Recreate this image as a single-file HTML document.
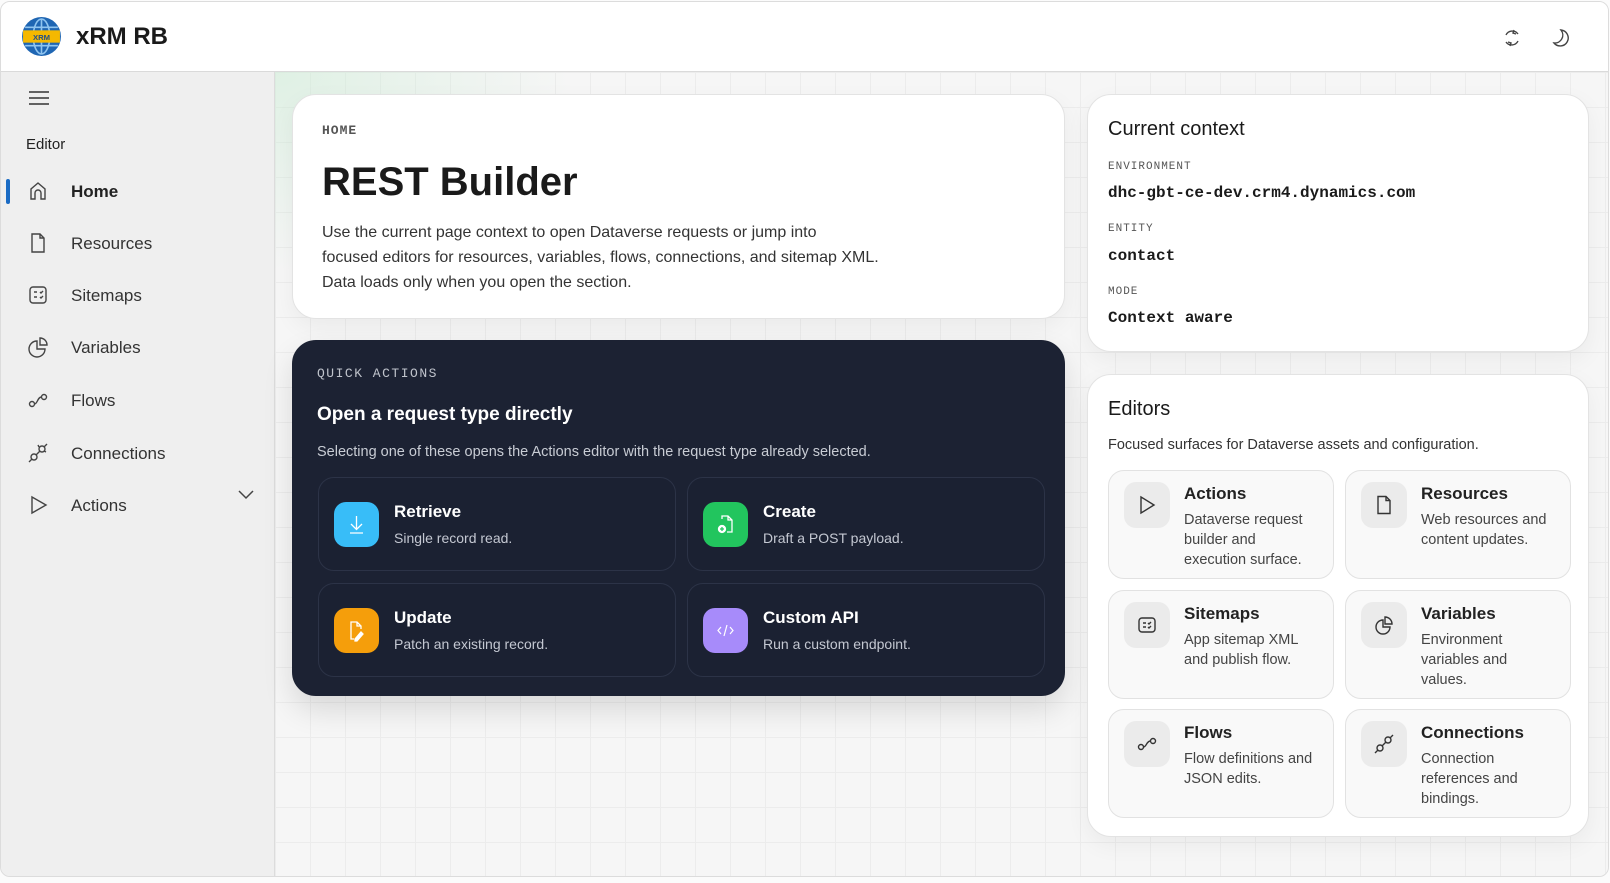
<!DOCTYPE html>
<html><head><meta charset="utf-8"><style>
*{box-sizing:border-box;margin:0;padding:0}
body{width:1610px;height:883px;overflow:hidden;background:#fbfbfb;font-family:"Liberation Sans",sans-serif;color:#1f1f1f;position:relative}
.win{position:absolute;left:0;top:1px;width:1609px;height:876px;border:1px solid #dcdcdc;border-radius:10px;overflow:hidden;background:#f5f5f5}
.hdr{position:absolute;left:0;top:0;right:0;height:70px;background:#fff;border-bottom:1px solid #dadada}
.side{position:absolute;left:0;top:70px;width:274px;bottom:0;background:#efefef;border-right:1px solid #dcdcdc}
.main{position:absolute;left:274px;top:70px;right:0;bottom:0;background-color:#f6f6f6;background-image:linear-gradient(#ececec 1px,transparent 1px),linear-gradient(90deg,#ececec 1px,transparent 1px);background-size:35px 35px}
.main:before{content:"";position:absolute;left:0;top:0;width:300px;height:200px;background:radial-gradient(ellipse at 0 0,rgba(200,235,210,.5),transparent 70%)}
.abs{position:absolute}
.card{position:absolute;background:#fff;border:1px solid #e3e3e3;border-radius:24px;box-shadow:0 8px 24px rgba(0,0,0,.05)}
.mono{font-family:"Liberation Mono",monospace}
.nav{position:absolute;left:0;width:274px;height:40px;font-size:17px;color:#333}
.nav svg{position:absolute;left:26px;top:8px}
.nav span{position:absolute;left:70px;top:10px}
.tile{position:absolute;background:#1b2132;border:1px solid #2c3347;border-radius:16px;width:358px;height:94px}
.tile .ic{position:absolute;left:15px;top:24px;width:45px;height:45px;border-radius:12px}
.tile b{position:absolute;left:75px;top:24px;color:#fff;font-size:17px}
.tile i{position:absolute;left:75px;top:52px;color:#c4c8d2;font-size:14px;font-style:normal}
.et{position:absolute;width:226px;height:109px;background:#f9f9f9;border:1px solid #e2e2e2;border-radius:16px}
.et .ic{position:absolute;left:15px;top:11px;width:46px;height:46px;border-radius:12px;background:#ebebeb}
.et .ic svg{position:absolute;left:13px;top:13px}
.et b{position:absolute;left:75px;top:13px;font-size:17px;font-weight:600;color:#222}
.et p{position:absolute;left:75px;top:39px;font-size:14.5px;line-height:20px;color:#444;width:128px}
</style></head><body>
<div class="win">
<div class="hdr">
 <svg class="abs" style="left:20px;top:14px" width="41" height="41" viewBox="0 0 40 40"><circle cx="20" cy="20" r="19" fill="#1f66b3"/><g stroke="#8fc4ef" stroke-width="1.6" fill="none"><ellipse cx="20" cy="20" rx="8" ry="17"/><line x1="20" y1="3" x2="20" y2="37"/><line x1="4" y1="11" x2="36" y2="11"/><line x1="4" y1="29" x2="36" y2="29"/></g><rect x="2" y="14" width="36" height="12" fill="#f5b800"/><text x="20" y="23.5" font-size="7.5" font-weight="bold" text-anchor="middle" fill="#1f4d8a" font-family="Liberation Sans">XRM</text></svg>
 <div class="abs" style="left:75px;top:21px;font-size:24px;font-weight:bold;color:#1a1a1a">xRM RB</div>
 <svg class="abs" style="left:1500px;top:25px" width="22" height="22" viewBox="0 0 22 22" fill="none" stroke="#444" stroke-width="1.4"><path d="M17 7a7 7 0 0 0-12 1"/><path d="M5 15a7 7 0 0 0 12-1"/><path d="M13 3l-1 3 3 1"/><path d="M9 19l1-3-3-1"/></svg>
 <svg class="abs" style="left:1550px;top:25px" width="22" height="22" viewBox="0 0 22 22" fill="none" stroke="#444" stroke-width="1.4"><path d="M10 3a8 8 0 1 1-7 13 8 8 0 0 0 7-13z"/></svg>
</div>
<div class="side">
 <svg class="abs" style="left:27px;top:17px" width="22" height="18" viewBox="0 0 22 18" stroke="#333" stroke-width="1.6"><line x1="1" y1="3" x2="21" y2="3"/><line x1="1" y1="9" x2="21" y2="9"/><line x1="1" y1="15" x2="21" y2="15"/></svg>
 <div class="abs" style="left:25px;top:64px;font-size:15px;color:#222">Editor</div>
 <div class="abs" style="left:5px;top:107px;width:4px;height:25px;border-radius:2px;background:#1a6bc4"></div>
 <div class="nav" style="top:100px"><svg width="22" height="22" viewBox="0 0 22 22" fill="none" stroke="#444" stroke-width="1.4"><path d="M4 19V9l7-6 7 6v10h-4v-6a3 3 0 0 0-6 0v6z"/></svg><span style="color:#222;font-weight:600">Home</span></div>
 <div class="nav" style="top:152px"><svg width="22" height="22" viewBox="0 0 22 22" fill="none" stroke="#444" stroke-width="1.4"><path d="M5 2h8l4 4v14H5z"/><path d="M13 2v4h4"/></svg><span>Resources</span></div>
 <div class="nav" style="top:204px"><svg width="22" height="22" viewBox="0 0 22 22" fill="none" stroke="#444" stroke-width="1.4"><rect x="3" y="3" width="16" height="16" rx="3"/><path d="M7 8h3M7 13h3M13 8l1 1 2-2M13 13l1 1 2-2"/></svg><span>Sitemaps</span></div>
 <div class="nav" style="top:256px"><svg width="22" height="22" viewBox="0 0 22 22" fill="none" stroke="#444" stroke-width="1.4"><path d="M10 5a8 8 0 1 0 8 8h-8z"/><path d="M13 2a7 7 0 0 1 7 7h-7z"/></svg><span>Variables</span></div>
 <div class="nav" style="top:309px"><svg width="22" height="22" viewBox="0 0 22 22" fill="none" stroke="#444" stroke-width="1.4"><circle cx="5" cy="15" r="2.5"/><circle cx="17" cy="8" r="2.5"/><path d="M7.5 15c3 0 3-7 7-7"/></svg><span>Flows</span></div>
 <div class="nav" style="top:362px"><svg width="22" height="22" viewBox="0 0 22 22" fill="none" stroke="#444" stroke-width="1.4"><circle cx="7" cy="15" r="3"/><circle cx="15" cy="7" r="3"/><path d="M2 20l3-3M20 2l-3 3M9 13l4-4M11 3l1 2M19 10l-2-1"/></svg><span>Connections</span></div>
 <div class="nav" style="top:414px"><svg width="22" height="22" viewBox="0 0 22 22" fill="none" stroke="#444" stroke-width="1.4"><path d="M5 3l14 8-14 8z"/></svg><span>Actions</span></div>
 <svg class="abs" style="left:237px;top:418px" width="16" height="10" viewBox="0 0 16 10" fill="none" stroke="#444" stroke-width="1.5"><path d="M1 1l7 7 7-7"/></svg>
</div>
<div class="main"></div>

<div class="card" style="left:291px;top:92px;width:773px;height:225px">
 <div class="abs mono" style="left:29px;top:28px;font-size:13px;font-weight:bold;color:#555;letter-spacing:1px">HOME</div>
 <div class="abs" style="left:29px;top:65px;font-size:40px;font-weight:bold;color:#1a1a1a">REST Builder</div>
 <div class="abs" style="left:29px;top:125px;font-size:16px;line-height:25px;color:#333;white-space:nowrap">Use the current page context to open Dataverse requests or jump into<br>focused editors for resources, variables, flows, connections, and sitemap XML.<br>Data loads only when you open the section.</div>
</div>

<div class="card" style="left:291px;top:338px;width:773px;height:356px;background:#1c2233;border-color:#1c2233;box-shadow:0 14px 30px rgba(0,0,0,.12)">
 <div class="abs mono" style="left:24px;top:25px;font-size:13px;color:#c0c4cc;letter-spacing:1.5px">QUICK ACTIONS</div>
 <div class="abs" style="left:24px;top:63px;font-size:19px;font-weight:bold;color:#fff">Open a request type directly</div>
 <div class="abs" style="left:24px;top:103px;font-size:14.5px;color:#c8ccd4">Selecting one of these opens the Actions editor with the request type already selected.</div>
 <div class="tile" style="left:25px;top:136px"><div class="ic" style="background:#38bdf8"><svg width="45" height="45" viewBox="0 0 45 45" fill="none" stroke="#fff" stroke-width="1.3"><path d="M22.5 14v13M17 22l5.5 5.5L28 22M16 31h13"/></svg></div><b>Retrieve</b><i>Single record read.</i></div>
 <div class="tile" style="left:394px;top:136px"><div class="ic" style="background:#22c55e"><svg width="45" height="45" viewBox="0 0 45 45" fill="none" stroke="#fff" stroke-width="1.3"><path d="M19 17V14h6l4 4v12h-5M25 14v4h4"/><circle cx="19" cy="27" r="3.5" fill="#fff"/><path d="M19 25v4M17 27h4" stroke="#22c55e"/></svg></div><b>Create</b><i>Draft a POST payload.</i></div>
 <div class="tile" style="left:25px;top:242px"><div class="ic" style="background:#f59e0b"><svg width="45" height="45" viewBox="0 0 45 45" fill="none" stroke="#fff" stroke-width="1.3"><path d="M20 31h-3V14h6l4 4v3M23 14v4h4"/><path d="M21 31l6-7 2 2-6 7h-2z" fill="#fff"/></svg></div><b>Update</b><i>Patch an existing record.</i></div>
 <div class="tile" style="left:394px;top:242px"><div class="ic" style="background:#a78bfa"><svg width="45" height="45" viewBox="0 0 45 45" fill="none" stroke="#fff" stroke-width="1.2"><path d="M18 19l-3 3.5 3 3.5M27 19l3 3.5-3 3.5M24 17l-3 11"/></svg></div><b>Custom API</b><i>Run a custom endpoint.</i></div>
</div>

<div class="card" style="left:1086px;top:92px;width:502px;height:258px">
 <div class="abs" style="left:20px;top:23px;font-size:20px;color:#1a1a1a">Current context</div>
 <div class="abs mono" style="left:20px;top:66px;font-size:11px;color:#555;letter-spacing:1px">ENVIRONMENT</div>
 <div class="abs mono" style="left:20px;top:89px;font-size:16px;font-weight:bold;color:#1a1a1a">dhc-gbt-ce-dev.crm4.dynamics.com</div>
 <div class="abs mono" style="left:20px;top:128px;font-size:11px;color:#555;letter-spacing:1px">ENTITY</div>
 <div class="abs mono" style="left:20px;top:152px;font-size:16px;font-weight:bold;color:#1a1a1a">contact</div>
 <div class="abs mono" style="left:20px;top:191px;font-size:11px;color:#555;letter-spacing:1px">MODE</div>
 <div class="abs mono" style="left:20px;top:214px;font-size:16px;font-weight:bold;color:#1a1a1a">Context aware</div>
</div>

<div class="card" style="left:1086px;top:372px;width:502px;height:463px">
 <div class="abs" style="left:20px;top:23px;font-size:20px;color:#1a1a1a">Editors</div>
 <div class="abs" style="left:20px;top:62px;font-size:14.5px;color:#333">Focused surfaces for Dataverse assets and configuration.</div>
 <div class="et" style="left:20px;top:95px"><div class="ic"><svg width="20" height="20" viewBox="0 0 20 20" fill="none" stroke="#333" stroke-width="1.4"><path d="M4 2l13 8-13 8z"/></svg></div><b>Actions</b><p>Dataverse request builder and execution surface.</p></div>
 <div class="et" style="left:257px;top:95px"><div class="ic"><svg width="20" height="20" viewBox="0 0 20 20" fill="none" stroke="#333" stroke-width="1.4"><path d="M4 1.5h8l4 4v13H4z"/><path d="M12 1.5v4h4"/></svg></div><b>Resources</b><p style="width:140px">Web resources and content updates.</p></div>
 <div class="et" style="left:20px;top:215px"><div class="ic"><svg width="20" height="20" viewBox="0 0 20 20" fill="none" stroke="#333" stroke-width="1.4"><rect x="2" y="3" width="16" height="14" rx="3"/><path d="M6 8h3M6 12h3M11 8l1 1 2-2M11 12l1 1 2-2"/></svg></div><b>Sitemaps</b><p>App sitemap XML and publish flow.</p></div>
 <div class="et" style="left:257px;top:215px"><div class="ic"><svg width="20" height="20" viewBox="0 0 20 20" fill="none" stroke="#333" stroke-width="1.4"><path d="M9 5a7 7 0 1 0 7 7H9z"/><path d="M11 2a7 7 0 0 1 7 7h-7z"/></svg></div><b>Variables</b><p>Environment variables and values.</p></div>
 <div class="et" style="left:20px;top:334px"><div class="ic"><svg width="20" height="20" viewBox="0 0 20 20" fill="none" stroke="#333" stroke-width="1.4"><circle cx="4" cy="13" r="2.5"/><circle cx="16" cy="7" r="2.5"/><path d="M6.5 13c3 0 3-6 7-6"/></svg></div><b>Flows</b><p style="width:140px">Flow definitions and JSON edits.</p></div>
 <div class="et" style="left:257px;top:334px"><div class="ic"><svg width="20" height="20" viewBox="0 0 20 20" fill="none" stroke="#333" stroke-width="1.4"><circle cx="6" cy="14" r="3"/><circle cx="14" cy="6" r="3"/><path d="M1 19l3-3M19 1l-3 3M8 12l4-4"/></svg></div><b>Connections</b><p>Connection references and bindings.</p></div>
</div>
</div>
</body></html>
